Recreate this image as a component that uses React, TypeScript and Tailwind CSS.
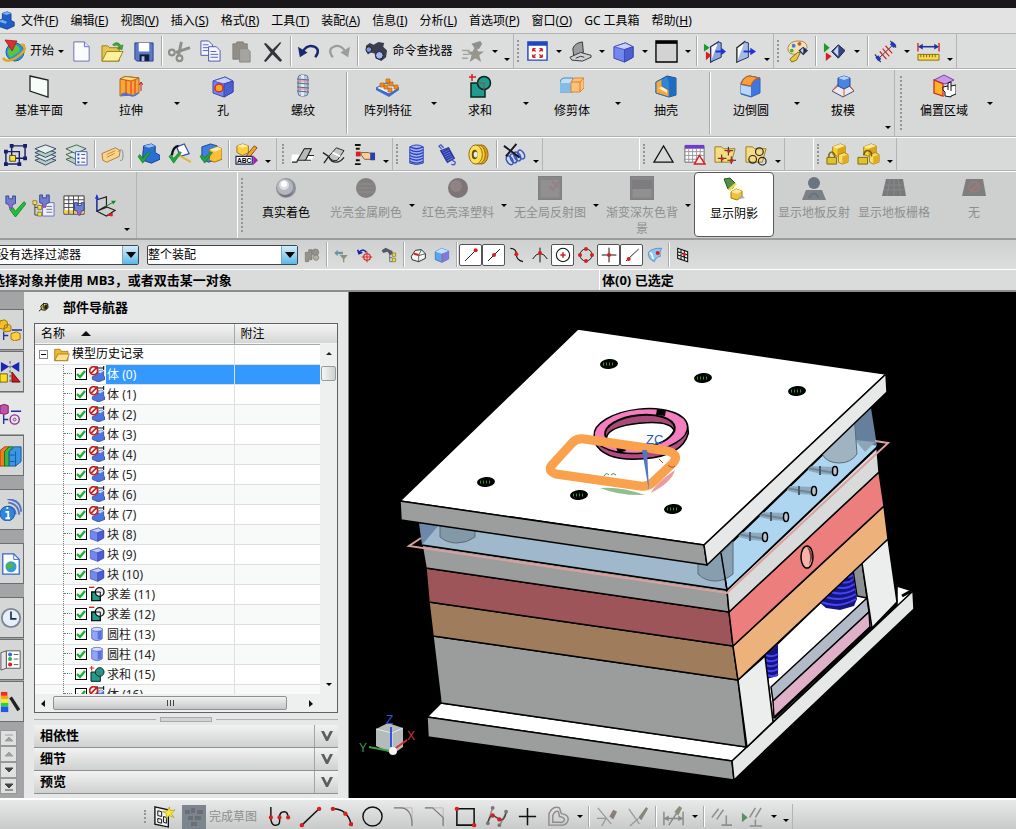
import { useState, type ReactNode } from 'react';

const RED = '#d81e1e';
const BLUE = '#3f66e0';

const cubeShape = (
    <>
        <path d="M2 7 14 3l8 4v11l-9 5-11-4z" fill="#7287f0" stroke="#3a49b0" />
        <path d="M2 7 14 3l8 4-9 3z" fill="#c9d1ff" stroke="#4a5ac4" />
        <path d="M13 10l9-3v11l-9 5z" fill="#4c5fd2" stroke="#3a49b0" />
    </>
);

const check = <path d="M1 14l5 7 8-11-2-1-6 7-3-4z" fill="#22a83a" stroke="#117024" strokeWidth=".6" />;

const funnelPipe = (
    <>
        <path d="M3 2h3v3h4V2h3v8l-3 1-1 4H7l-1-4-3-1z" fill="#6f7ed0" stroke="#3b479a" />
        <path d="M6 12h4l-2 4z" fill="#c04fd0" />
    </>
);

const brokenScreen = (
    <>
        <path d="M0 0h24v24H0z" fill="#7d7d7f" stroke="#6a6a6c" />
        <path d="M2 3h20v19H2z" fill="#878485" stroke="#747476" />
    </>
);

const yellowBoxes = (
    <>
        <path d="M7 4l8-3 5 2v8l-8 3-5-2z" fill="#f6cf3c" stroke="#a8820e" />
        <path d="M7 4l8-3 5 2-8 3z" fill="#fdeb9a" />
        <path d="M12 6l8-3v8l-8 3z" fill="#dba51b" />
        <path d="M13 12l6-2 4 2v8l-6 2-4-2z" fill="#fbdc64" stroke="#a8820e" />
        <path d="M17 14l6-2v8l-6 2z" fill="#e2ac22" />
    </>
);

const ICONS: Record<string, ReactNode> = {
    app: (
        <>
            <path d="M8 3l6-2 5 2v9l4 2v5l-9 4L2 19v-6l6-3z" fill="#1f5ec4" stroke="#123a86" />
            <path d="M8 3l6-2 5 2-6 2zM2 13l6-2 6 3-2 2z" fill="#78aef2" />
        </>
    ),
    start: (
        <>
            <circle cx="13" cy="13" r="9" fill="#2a8fe0" stroke="#1560a8" />
            <path d="M8 8q6-4 9 0t-3 7-5 5-4-7z" fill="#57c643" />
            <path d="M1 19q4 6 14-1T22 8q1-3-3-2" fill="none" stroke="#e2a91c" strokeWidth="2.4" />
            <path d="M3 1l12 1-5 10z" fill="#d93030" stroke="#8d1414" strokeWidth=".7" />
        </>
    ),
    new: (
        <>
            <path d="M4 2h11l5 5v15H4z" fill="#fbfbff" stroke="#6a6ec0" />
            <path d="M15 2v5h5" fill="#dfe2ff" stroke="#6a6ec0" />
        </>
    ),
    open: (
        <>
            <path d="M1 6h6l2 2h10v14H1z" fill="#e3c652" stroke="#a08018" />
            <path d="M1 22l5-10h17l-5 10z" fill="#fbf19a" stroke="#a08018" />
            <path d="M12 5q5-5 9 1l2-1-1 5-5-1 2-1q-2-4-5-2z" fill="#3ea537" stroke="#1d6f1d" strokeWidth=".5" />
        </>
    ),
    save: (
        <>
            <path d="M3 3h19v19H5l-2-2z" fill="#5b79c8" stroke="#2f4186" />
            <path d="M7 3h11v9H7z" fill="#fff" />
            <path d="M8 15h10v7H8z" fill="#111b3b" />
            <path d="M10 17h3v5h-3z" fill="#aebbe0" />
        </>
    ),
    cut: (
        <g fill="none" stroke="#8f8f8a" strokeWidth="2.2">
            <path d="M14 2l-3 14M23 8L8 13" strokeWidth="3" />
            <circle cx="4" cy="13" r="3" />
            <circle cx="12" cy="19" r="3" />
        </g>
    ),
    copy: (
        <>
            <path d="M2 1h8l4 4v11H2z" fill="#f4f5ff" stroke="#4d56b4" />
            <path d="M4 5h6M4 8h8M4 11h8" stroke="#5661c9" />
            <path d="M10 7h8l4 4v11H10z" fill="#f4f5ff" stroke="#4d56b4" />
            <path d="M12 12h6M12 15h8M12 18h8" stroke="#5661c9" />
        </>
    ),
    paste: (
        <>
            <path d="M3 4h4V2h7v2h4v16H3z" fill="#918e87" stroke="#85827b" />
            <path d="M10 9h8l3 3v11H10z" fill="#a5a49e" stroke="#8b8a85" />
        </>
    ),
    del: <path d="M3 4l2-1 7 7 8-8 1 1-7 9 8 9-2 2-8-8-7 8-2-1 7-9z" fill="#33353b" />,
    undo: (
        <>
            <path d="M6 12q5-8 12-5t1 11" fill="none" stroke="#19296f" strokeWidth="2.6" />
            <path d="M1 7l2 11 8-5z" fill="#19296f" />
        </>
    ),
    redo: (
        <>
            <path d="M18 12Q13 4 6 7t-1 11" fill="none" stroke="#9a9c9e" strokeWidth="2.4" />
            <path d="M23 7l-2 11-8-5z" fill="#9a9c9e" />
        </>
    ),
    find: (
        <>
            <path d="M1 6l4-3 4 2 5-3 6 1-1 4 4 4-1 7-5 4-6-3-1-5-4-1-3 2-2-4z" fill="#3b3f4d" />
            <circle cx="4" cy="10" r="3" fill="#7f97dd" stroke="#16182a" />
            <circle cx="15" cy="16" r="4" fill="#a6b9f2" stroke="#16182a" />
        </>
    ),
    star: (
        <>
            <path d="M10 4l9-3 2 3-3 5-4 1z" fill="#8f8f8f" />
            <path d="M14 6l3 6h6l-5 4 2 7-6-4-6 4 2-7-5-4h6z" fill="#98958c" />
            <path d="M0 11h8M1 15h7M0 19h6" stroke="#a3a3a3" strokeWidth="1.5" />
        </>
    ),
    fit: (
        <>
            <path d="M2 2h20v19H2z" fill="#fff" stroke="#2347c0" strokeWidth="1.5" />
            <path d="M2 2h20v4H2z" fill="#2347c0" />
            <path d="M7 9l3 3M7 9v3m0-3h3M17 9l-3 3m3-3v3m0-3h-3M7 18l3-3m-3 3v-3m0 3h3M17 18l-3-3m3 3v-3m0 3h-3" stroke={RED} strokeWidth="1.4" fill="none" />
        </>
    ),
    clip: (
        <>
            <path d="M4 9q2-6 10-7l1 11-10 5z" fill="#999ca0" stroke="#333" />
            <path d="M1 18l11-5 11 3v2l-9 4-11-1z" fill="#d0d1d3" stroke="#333" />
            <path d="M7 19l5-2 4 1" fill="none" stroke="#333" />
        </>
    ),
    cube: cubeShape,
    windowBox: (
        <>
            <path d="M1 1h22v22H1z" fill="#d3d3d3" stroke="#000" strokeWidth="1.4" />
            <path d="M1 1h22v3H1z" fill="#000" />
        </>
    ),
    sectionA: (
        <>
            <path d="M8 7l8-5v16l-8 5z" fill="#f5f9ff" stroke="#22315f" strokeWidth="1.4" />
            <path d="M16 2l3 1v15l-11 5" fill="#8ba4dd" stroke="#22315f" />
            <path d="M1 4l6 4-6 4z" fill="#189a2c" />
            <path d="M3 12l6 4-6 5z" fill={RED} />
            <path d="M13 12h7" stroke="#1e30d8" strokeWidth="2" />
            <path d="M19 8l5 4-5 4z" fill="#1e30d8" />
        </>
    ),
    sectionB: (
        <>
            <path d="M3 8l8-6v16l-8 5z" fill="#fff" stroke="#222" strokeWidth="1.4" />
            <path d="M11 2l4 1v15L3 23" fill="#a5bbe8" stroke="#22315f" />
            <path d="M10 12h8" stroke="#1e30d8" strokeWidth="2" />
            <path d="M17 8l6 4-6 4z" fill="#1e30d8" />
        </>
    ),
    palette: (
        <>
            <path d="M2 8q2-7 11-7t9 7q-1 3-6 2l-3 5q-12 1-11-7z" fill="#f3e3b6" stroke="#a6873c" />
            <circle cx="8" cy="6" r="2" fill="#3880e0" />
            <circle cx="14" cy="4" r="2" fill="#e04a30" />
            <circle cx="6" cy="11" r="2" fill="#42b243" />
            <path d="M12 13l-8 7 2 3 5-2 4-8z" fill="#e8c84a" stroke="#8a6b14" />
            <path d="M13 11l5-4 5 4-5 5z" fill="#233057" />
            <path d="M15 11l3-3v6z" fill="#c6d6ff" />
        </>
    ),
    marker: (
        <>
            <path d="M2 3l6 5-6 5z" fill="#189a2c" />
            <path d="M4 13l6 4-6 5z" fill={RED} />
            <path d="M10 12l7-7 7 6-7 8z" fill="#32457f" stroke="#1a2650" />
            <path d="M12 12l5-6v11z" fill="#c8d7ff" />
        </>
    ),
    measure: (
        <>
            <path d="M4 20L21 4" stroke="#333" />
            <path d="M6 12l7 8M9 9l7 8M12 6l7 8" stroke={RED} strokeWidth="1.2" />
            <path d="M1 15l6 8M17 1l6 7" stroke="#333" strokeWidth="1.2" />
            <path d="M3 17l3 4M18 3l4 4" stroke="#2434c0" strokeWidth="4" />
        </>
    ),
    ruler: (
        <>
            <path d="M1 3v9M23 3v9" stroke={RED} strokeWidth="1.4" />
            <path d="M3 7h18" stroke="#203299" strokeWidth="1.6" />
            <path d="M1 7l5-3v6zM23 7l-5-3v6z" fill="#203299" />
            <path d="M1 15h22v6H1z" fill="#f7dc4a" stroke="#8b6e10" />
            <path d="M4 15v3M7 15v3M10 15v3M13 15v3M16 15v3M19 15v3" stroke="#7d6410" />
        </>
    ),
    plane: <path d="M3 2l18 4v17L3 17z" fill="#f6fdf9" stroke="#222" strokeWidth="1.3" />,
    extrude: (
        <>
            <path d="M1 5q5-4 10-2l9 1v15q-5 4-9 2l-10 1z" fill="#f9a637" stroke="#b9640f" />
            <path d="M1 5q5-4 10-2l9 1-8 3z" fill="#ffdf8c" stroke="#b9640f" />
            <path d="M2 20q4-3 8 0t9-2v2q-4 4-8 2H2z" fill="#4777df" />
            <path d="M7 6v15M12 7v14M16 6v14" stroke="#d4381b" />
            <path d="M22 17V9m-2 2l2-3 2 3" fill="none" stroke="#c71818" />
        </>
    ),
    hole: (
        <>
            {cubeShape}
            <circle cx="8" cy="14" r="4" fill="#f5a81c" stroke="#d22" strokeWidth="1.4" />
        </>
    ),
    thread: (
        <>
            <rect x="7" y="1" width="10" height="21" rx="3" fill="#b6c5da" stroke="#6a7b96" />
            <path d="M10 1h3v21h-3z" fill="#dfe8f4" />
            <path d="M6 5l12 1M6 9l12 1M6 13l12 1M6 17l12 1" stroke="#5a6880" />
            <path d="M7 7h9M7 15h9" stroke="#d87c7c" />
        </>
    ),
    pattern: (
        <>
            <path d="M0 14l10-5 13 5-10 6z" fill="#e5efff" stroke="#2d55b8" />
            <path d="M0 14v2l13 7 10-7v-2l-10 6z" fill="#3f6bd2" />
            <path d="M4 9h4v4H4zM10 5h4v4h-4zM8 11h4v4H8zM13 8h4v4h-4zM12 14h4v4h-4zM18 11h4v4h-4z" fill="#f28a16" stroke="#b96a16" strokeWidth=".7" />
        </>
    ),
    unite: (
        <>
            <path d="M1 3h7M4 0v7" stroke={RED} strokeWidth="1.5" />
            <path d="M3 9h14v14H3z" fill="#1f9c8b" stroke="#0a2522" strokeWidth="1.5" />
            <circle cx="16" cy="9" r="6.5" fill="#1f9c8b" stroke="#0a2522" strokeWidth="1.5" />
            <path d="M9 9h7v7" fill="none" stroke="#b03a3a" strokeWidth=".8" />
        </>
    ),
    trim: (
        <>
            <path d="M0 8q1-4 4-4h9v14H0z" fill="#bfdff6" stroke="#4a86bd" />
            <path d="M0 9h11v9H0z" fill="#82bcea" />
            <path d="M11 8l3-4h10v10l-4 4h-9z" fill="#fbc27c" stroke="#d98932" />
            <path d="M11 8h9v10M20 8l4-4" fill="none" stroke="#e07a2a" />
        </>
    ),
    shell: (
        <>
            <path d="M2 8l11-6 9 2v17l-7 2-13-4z" fill="#2f86d8" stroke="#164f92" />
            <path d="M13 3l9 1v17l-7 2V9z" fill="#1f6cc0" />
            <path d="M2 8l6-3v7l7 4v7L2 19z" fill="#f4a93e" stroke="#3c74ae" />
            <path d="M4 14l9 5v-3l-5-3z" fill="#fff1c7" />
        </>
    ),
    blend: (
        <>
            <path d="M2 9q3-7 9-7l10 2v15l-9 4-10-3z" fill="#3f76df" stroke="#3b62b4" />
            <path d="M2 10q3-8 9-8l10 2q-7 0-9 8z" fill="#f9a03c" stroke="#c15a12" />
            <path d="M2 11l10 2v9L2 19z" fill="#b9d6ff" />
        </>
    ),
    draft: (
        <>
            <path d="M12 5L1 17l11 6 11-6z" fill="#e8eaec" stroke="#3c4b80" />
            <path d="M7 4l6-2 6 2v8l-6 3-6-3z" fill="#4a83e2" stroke="#24499c" />
            <path d="M7 4l6-2 6 2-6 2z" fill="#b6d1ff" />
            <path d="M7 12l-6 5M19 12l4 5M13 15v8" stroke="#e05b2a" />
        </>
    ),
    offset: (
        <>
            <path d="M2 6l10-5 10 5-9 4z" fill="#c79be6" stroke="#7c3ca8" />
            <path d="M2 6l9 4v12l-9-3z" fill="#ffb52a" stroke="#d42a1a" strokeWidth="1.3" />
            <path d="M11 13l5-1V9l3-1v4l5-1v9l-5 2v1l-6-1v-4l-2-2z" fill="#fff" stroke="#111" />
            <path d="M16 12v4M19 12v5" stroke="#111" fill="none" />
        </>
    ),
    selBox: (
        <>
            <path d="M8 3h14v13H8z" fill="none" stroke="#17206e" strokeWidth="1.5" />
            <path d="M2 9h14v13H2z" fill="none" stroke="#17206e" strokeWidth="1.5" />
            <path d="M6 13h6v6H6z" fill="#f6e73c" stroke="#55500a" />
            <g fill="#17206e">
                <path d="M6 1h4v4H6zM20 1h4v4h-4zM20 14h4v4h-4zM0 7h4v4H0zM0 20h4v4H0zM14 20h4v4h-4z" />
            </g>
        </>
    ),
    layers: (
        <g stroke="#35456a">
            <path d="M1 18l11-4 11 4-11 5z" fill="#b5d0c2" />
            <path d="M1 14l11-4 11 4-11 5z" fill="#d8e6de" />
            <path d="M1 10l11-4 11 4-11 5z" fill="#b5d0c2" />
            <path d="M1 6l11-4 11 4-11 5z" fill="#e4efe9" />
        </g>
    ),
    layerList: (
        <>
            <g stroke="#46604e">
                <path d="M1 17l11-4 9 4-10 5z" fill="#b5d0c2" />
                <path d="M1 12l11-4 9 4-10 5z" fill="#d8e6de" />
                <path d="M1 6l11-4 10 4-11 5z" fill="#cfe2d7" />
            </g>
            <path d="M11 9h12v14H11z" fill="#f4f6ff" stroke="#4c5fc0" />
            <path d="M13 12h2M13 16h2M13 20h2" stroke="#2447d8" strokeWidth="2" />
            <path d="M17 12h4M17 16h4M17 20h4" stroke="#555" />
        </>
    ),
    tag: (
        <>
            <path d="M1 11l14-6 5 3-1 6-13 6-4-2z" fill="#f9d58e" stroke="#b87a26" />
            <path d="M6 12l9-4M6 15l8-4" stroke="#c58a38" />
            <path d="M18 9q5-5 5 3t-3 6" fill="none" stroke="#888" />
        </>
    ),
    checkPart: (
        <>
            <path d="M7 3l8-2 4 2v7l5 3v4l-9 4-9-3v-6z" fill="#2c6fd4" stroke="#173f8a" />
            <path d="M7 3l8-2 4 2-7 2z" fill="#93c0ff" />
            {check}
        </>
    ),
    checkSheet: (
        <>
            <path d="M9 4l8-3 5 10-9 3z" fill="#fff" stroke="#3b4cb0" strokeWidth="1.3" />
            <path d="M4 13q1-9 7-10" fill="none" stroke="#111" strokeWidth="2.5" />
            <path d="M10 12l14 8" stroke="#dfb82c" strokeWidth="2" />
            {check}
        </>
    ),
    checkBox: (
        <>
            <path d="M3 4l9-3 7 2v14l-9 3-7-3z" fill="#3f7fe0" stroke="#1d4796" />
            <path d="M11 7l8-3 5 2v11l-8 3-5-2z" fill="#fbbf3a" stroke="#a86e0a" />
            <path d="M11 7l8-3 5 2-7 3z" fill="#ffe9a8" />
            {check}
        </>
    ),
    abc: (
        <>
            <path d="M2 3l6-2 6 2v7l-6 3-6-3z" fill="#f9ce3f" stroke="#a67908" />
            <path d="M2 3l6-2 6 2-6 2z" fill="#ffeeb0" />
            <path d="M12 13l8-10 3 2-8 10z" fill="#f3a42a" stroke="#8a4b08" />
            <path d="M1 14h17v8H1z" fill="#fff" stroke="#1c2270" strokeWidth="1.2" />
            <text x="2" y="21" fontSize="7" fontWeight="bold" fontFamily="Liberation Sans" fill="#000">
                ABC
            </text>
            <path d="M19 13l5 5-5 5z" fill="#a221a8" />
        </>
    ),
    edgeA: (
        <>
            <path d="M1 12h8l-5 8H0zM18 13h6l-3 6h-6z" fill="#fff" />
            <path d="M1 20h5l8-14h7l-6 12h6M18 13h6" fill="none" stroke="#222" strokeWidth="1.2" />
            <path d="M7 18l7-12h7l-6 12z" fill="#b9b9b9" stroke="#222" />
        </>
    ),
    edgeB: (
        <>
            <path d="M7 14l8-9 8 3-7 10q-5 2-9-4z" fill="#c3c5c3" stroke="#222" />
            <path d="M11 10l8 4" stroke="#fff" strokeWidth="2" />
            <path d="M1 10l6 4q2 6 8 6 4 0 8-5M2 21l5-7" fill="none" stroke="#222" strokeWidth="1.4" />
        </>
    ),
    handPick: (
        <>
            <path d="M2 1h6v2H2zM3 5h4v2H3zM3 17h4v2H3zM2 21h6v2H2z" fill="#111" />
            <path d="M3 9h5v5H3z" fill={RED} />
            <path d="M8 10h8l3 1v6h-7l-3-4z" fill="#f6d2a0" stroke="#8d5a22" />
            <path d="M18 10h5v8h-5z" fill="#2a3fae" />
        </>
    ),
    coil: (
        <g fill="none" stroke="#2c40bc" strokeWidth="1.3">
            <path d="M5 4q7-4 14 0v17q-7 3-14 0z" fill="#a3b3f3" strokeWidth="1" />
            <path d="M5 4q7 4 14 0M5 7q7 4 14 0M5 10q7 4 14 0M5 13q7 4 14 0M5 16q7 4 14 0M5 19q7 4 14 0" />
        </g>
    ),
    tension: (
        <g fill="none" stroke="#2b3ba6" strokeWidth="1.5">
            <path d="M6 6q-5-3-1-4l3 3M17 18l3 2q0 4-4 2" stroke="#4a5dc6" />
            <path d="M5 8l8-3 6 11-7 4z" fill="#7a8be0" />
            <path d="M6 10l8-4M7 12l8-4M8 14l8-4M9 16l8-4M10 18l8-4" />
        </g>
    ),
    disk: (
        <>
            <ellipse cx="15" cy="12" rx="7" ry="10" fill="#dba016" stroke="#8d660c" />
            <ellipse cx="12" cy="12" rx="7" ry="10" fill="#f8d133" stroke="#8d660c" />
            <ellipse cx="9" cy="12" rx="7" ry="10" fill="#fde05a" stroke="#8d660c" />
            <ellipse cx="8" cy="12" rx="3" ry="5" fill="#6b5008" />
            <ellipse cx="9" cy="12" rx="2" ry="3" fill="#e8e8e8" />
        </>
    ),
    coilDel: (
        <>
            <g fill="none" stroke="#3656c8" strokeWidth="1.6">
                <ellipse cx="7" cy="18" rx="3" ry="5" transform="rotate(-30 7 18)" />
                <ellipse cx="11" cy="16" rx="3" ry="5" transform="rotate(-30 11 16)" />
                <ellipse cx="15" cy="14" rx="3" ry="5" transform="rotate(-30 15 14)" />
                <ellipse cx="19" cy="12" rx="3" ry="5" transform="rotate(-30 19 12)" />
            </g>
            <path d="M1 3l16 12M14 1L3 14" stroke="#16181c" strokeWidth="2" />
        </>
    ),
    triangle: <path d="M12 3l10 17H2z" fill="none" stroke="#111" strokeWidth="1.3" />,
    tableWarn: (
        <>
            <path d="M2 3h20v17H2z" fill="#fff" stroke="#666" />
            <path d="M2 2h20v4H2z" fill="#6d3bd0" />
            <path d="M6 6v14M10 6v14M14 6v14M18 6v14M2 9h20M2 13h20M2 17h20" stroke="#999" />
            <path d="M17 13l6 9H12z" fill="#f6eaea" stroke={RED} strokeWidth="1.5" />
        </>
    ),
    folderPts: (
        <>
            <path d="M1 4h7l2 2h12l-4 14H1z" fill="#f5dc83" stroke="#9c7b1c" />
            <path d="M15 4v9M11 8h9M8 12v8M4 16h9M18 14v8M14 18h9" stroke="#222" />
            <path d="M14 7h3v3h-3zM7 15h3v3H7zM17 17h3v3h-3z" fill={RED} />
        </>
    ),
    folderCircles: (
        <>
            <path d="M1 4h7l2 2h12l-4 14H1z" fill="#f5dc83" stroke="#9c7b1c" />
            <g fill="none" stroke="#222" strokeWidth="1.2">
                <circle cx="15" cy="9" r="4" />
                <circle cx="8" cy="17" r="4" />
                <circle cx="18" cy="19" r="4" />
            </g>
        </>
    ),
    lock: (
        <>
            {yellowBoxes}
            <path d="M3 15v-3q3-5 6 0v3" fill="none" stroke="#7d6a08" strokeWidth="1.6" />
            <path d="M1 15h10v7H1z" fill="#dcc52c" stroke="#7d6a08" />
        </>
    ),
    unlock: (
        <>
            {yellowBoxes}
            <path d="M7 13q1-6 5-5t3 6" fill="none" stroke="#6f5d05" strokeWidth="1.6" />
            <path d="M1 15h10v7H1z" fill="#dcc52c" stroke="#7d6a08" />
        </>
    ),
    filterCheck: (
        <>
            <path d="M7 16l3-2 3 4 9-10 2 2-11 14z" fill="#1fc235" stroke="#0f8a20" />
            {funnelPipe}
        </>
    ),
    filterTree: (
        <>
            <path d="M11 9h12v14H11z" fill="#eef0ff" stroke="#6471c4" />
            <path d="M15 13h6M15 16h6M15 19h6" stroke="#777" />
            <path d="M3 9v13h5M3 14h5" fill="none" stroke="#444" />
            <path d="M1 7h4v4H1zM6 12h4v4H6zM6 19h4v4H6z" fill="#f4e05a" stroke="#806e12" strokeWidth=".8" />
            <g transform="translate(5 -1)">{funnelPipe}</g>
        </>
    ),
    filterTable: (
        <>
            <path d="M1 2h21v19H1z" fill="#fff" stroke="#333" />
            <path d="M1 17h21v3H1z" fill="#f4cf31" />
            <path d="M6 2v19M11 2v19M16 2v19M1 6h21M1 10h21M1 14h21" stroke="#444" />
            <g transform="translate(9 7)">{funnelPipe}</g>
        </>
    ),
    csys: (
        <>
            <path d="M3 6l10-3v11l-10 4zM3 18l9-5 10 4-9 6z" fill="none" stroke="#222" strokeWidth="1.2" />
            <path d="M3 18V2" stroke="#1e30d8" />
            <path d="M1 5l2-5 2 5z" fill="#1e30d8" />
            <path d="M12 13l9-5" stroke="#128a20" />
            <path d="M18 7l5 0-3 4z" fill="#128a20" />
            <path d="M14 22l5 1 0-3z" fill={RED} stroke={RED} />
        </>
    ),
    ballShiny: (
        <>
            <circle cx="12" cy="12" r="10" fill="#8e9199" />
            <circle cx="11" cy="11" r="8" fill="#b5b7bf" />
            <circle cx="10" cy="9" r="5" fill="#dcdce2" />
            <circle cx="10" cy="8" r="3" fill="#fff" />
            <path d="M5 17q7 5 14-2-2 6-7 6-5 0-7-4z" fill="#72757e" />
        </>
    ),
    ballMetal: (
        <>
            <circle cx="12" cy="12" r="10" fill="#777373" />
            <path d="M4 8h16M3 12h18M4 16h16" stroke="#8a8484" />
        </>
    ),
    ballRed: (
        <>
            <circle cx="12" cy="12" r="10" fill="#6f6466" />
            <circle cx="10" cy="10" r="6" fill="#867677" />
        </>
    ),
    reflect: (
        <>
            {brokenScreen}
            <path d="M11 10l4 4 6-9M14 5l6 6" stroke="#8c7474" strokeWidth="2" fill="none" />
        </>
    ),
    gradient: (
        <>
            {brokenScreen}
            <path d="M2 4h20v9H2z" fill="#6f6f72" />
        </>
    ),
    shadow: (
        <>
            <path d="M8 12l12-3 2 12-9 1z" fill="#fffbd8" />
            <path d="M2 2l6-1 5 5-2 5-5 1-2-5z" fill="#4f8f48" stroke="#24552a" />
            <path d="M6 12l7-6 2 1-7 7z" fill="#f4da46" />
            <path d="M9 15l5-3 6 2v6l-5 3-6-2z" fill="#f5c132" stroke="#a57a12" />
            <path d="M9 15l5-3 6 2-5 3z" fill="#fdeaa2" />
            <path d="M16 22l7-1-4-3z" fill="#aaa" />
        </>
    ),
    floorReflect: (
        <>
            <circle cx="12" cy="7" r="6" fill="#586673" />
            <path d="M4 14h16l4 10H0z" fill="#717476" />
            <path d="M7 22q5-9 10 0" fill="none" stroke="#4f6678" strokeWidth="2" />
        </>
    ),
    floorGrid: (
        <>
            <path d="M4 3h17l3 17H0z" fill="#6b6b6d" />
            <path d="M3 9h19M2 14h21M12 3v17M8 3l-3 17M16 3l3 17" stroke="#7c7c7e" />
        </>
    ),
    floorNone: (
        <>
            <path d="M4 3h17l3 17H0z" fill="#707070" />
            <circle cx="12" cy="11" r="5" fill="none" stroke="#a06a6a" strokeWidth="1.5" />
            <path d="M9 15l7-7" stroke="#a06a6a" strokeWidth="1.5" />
        </>
    ),
    gears: (
        <g fill="#93938b" stroke="#77776f">
            <path d="M2 8h5V4h5v15H7v3H2z" />
            <circle cx="17" cy="8" r="5" />
            <circle cx="18" cy="16" r="4" fill="#b5b19c" />
        </g>
    ),
    swapFunnel: (
        <>
            <path d="M2 9l5-5v3h8v4H7v3z" fill="#6d94a4" />
            <path d="M10 12h12l-5 6v5h-2v-5z" fill="#8f8f80" />
        </>
    ),
    targetBack: (
        <>
            <path d="M3 8q6-7 11 0M1 4l2 6 5-2" fill="none" stroke="#16229c" strokeWidth="2.4" />
            <circle cx="15" cy="15" r="5" fill="none" stroke={RED} strokeWidth="1.6" />
            <path d="M15 7v16M7 15h16" stroke={RED} strokeWidth="1.4" />
        </>
    ),
    findTree: (
        <>
            <path d="M1 5l6-4 10 5 1 5-5 1-3-5-7 2z" fill="#555a66" />
            <path d="M13 11v11h4M13 16h4" fill="none" stroke="#444" />
            <path d="M17 9h5v5h-5zM17 17h5v5h-5z" fill="#eedb4c" stroke="#7a6b14" />
        </>
    ),
    faceBody: (
        <>
            <path d="M2 14L8 5l9-1 6 6v7l-10 5-10-3z" fill="#f6f6f6" stroke="#222" strokeWidth="1.4" />
            <path d="M13 22v-9l4-9M13 13l10-3" fill="none" stroke="#222" />
            <path d="M6 10l7 2" stroke={RED} strokeWidth="3" />
        </>
    ),
    wireCube: (
        <>
            <path d="M2 7l9-5 11 4v12l-10 5-10-4z" fill="#59a8ee" stroke="#2a62b4" />
            <path d="M2 7l9-5 11 4-10 4z" fill="#bfe0ff" />
            <path d="M12 10l10-4v12l-10 5z" fill="#7d7be0" />
            <path d="M12 10v13" stroke="#e04444" />
        </>
    ),
    snapEnd: (
        <>
            <path d="M3 21L19 5" stroke="#111" strokeWidth="1.4" />
            <circle cx="19" cy="5" r="3" fill={RED} />
        </>
    ),
    snapMid: (
        <>
            <path d="M3 21L21 3" stroke="#111" strokeWidth="1.4" />
            <circle cx="12" cy="12" r="3" fill={RED} />
        </>
    ),
    snapCurve: (
        <>
            <path d="M2 2q9 0 9 9t10 11" fill="none" stroke="#111" strokeWidth="1.8" />
            <circle cx="11" cy="11" r="3" fill={RED} />
        </>
    ),
    snapCross: (
        <>
            <path d="M12 1v22M1 18q11-17 22 0" fill="none" stroke="#111" strokeWidth="1.5" />
            <circle cx="12" cy="9" r="3" fill={RED} />
        </>
    ),
    snapCenter: (
        <>
            <circle cx="12" cy="12" r="10" fill="none" stroke="#111" strokeWidth="1.6" />
            <path d="M12 8v8M8 12h8" stroke={RED} strokeWidth="2.4" />
        </>
    ),
    snapQuad: (
        <>
            <circle cx="12" cy="12" r="9" fill="none" stroke="#111" strokeWidth="1.4" />
            <g fill={RED}>
                <circle cx="12" cy="3" r="3" />
                <circle cx="12" cy="21" r="3" />
                <circle cx="3" cy="12" r="3" />
                <circle cx="21" cy="12" r="3" />
            </g>
        </>
    ),
    snapPoint: (
        <>
            <path d="M12 1v22M1 12h22" stroke="#111" strokeWidth="1.5" />
            <circle cx="12" cy="12" r="3" fill={RED} />
        </>
    ),
    snapOn: (
        <>
            <path d="M3 21L22 3" stroke="#111" strokeWidth="1.4" />
            <circle cx="7" cy="18" r="3" fill={RED} />
        </>
    ),
    snapFace: (
        <>
            <path d="M2 8q6-7 20-6-4 5-2 12-7 1-9 8-10-4-9-14z" fill="#8fc5f4" stroke="#3b78bf" />
            <path d="M4 9q4 0 5 9" stroke="#e9f5ff" strokeWidth="3" fill="none" />
            <circle cx="16" cy="9" r="3" fill={RED} />
        </>
    ),
    snapGrid: (
        <>
            <path d="M4 2l15 5v15L4 17z" fill="#eee" stroke="#111" strokeWidth="1.6" />
            <path d="M9 4v15M14 5v15M4 7l15 5M4 12l15 5" stroke="#111" strokeWidth="1.6" />
            <circle cx="14" cy="11" r="2.5" fill={RED} />
        </>
    ),
    pin: (
        <>
            <path d="M2 20l7-6" stroke="#111" strokeWidth="2" />
            <path d="M6 9l6-6 9 1 1 8-6 6-8-1z" fill="#e3d23a" stroke="#111" strokeWidth="2" />
            <path d="M12 3l-1 9 5 5" fill="none" stroke="#111" strokeWidth="2" />
            <path d="M15 6h6v8l-4 3-4-5z" fill="#222" />
        </>
    ),
    folder: (
        <>
            <path d="M1 5h8l2 3h10v14H1z" fill="#f0b72e" stroke="#8f620a" />
            <path d="M1 22l5-10h17l-4 10z" fill="#fde08a" stroke="#8f620a" />
        </>
    ),
    body: (
        <>
            <path d="M12 9l6-3 4 2v7l2 2v3l-10 4-9-4v-4l7-3z" fill="#4c74e0" stroke="#1e378c" />
            <path d="M12 9l6-3 4 2-5 3z" fill="#c3d6ff" />
            <path d="M12 3h10M12 0v6M22 0v6" stroke="#111" strokeWidth="1.6" />
            <circle cx="7" cy="7" r="6" fill="#fff" stroke="#c81c1c" strokeWidth="2.6" />
            <path d="M3 11l8-8" stroke="#c81c1c" strokeWidth="2.6" />
        </>
    ),
    subtract: (
        <>
            <path d="M0 2h8" stroke={RED} strokeWidth="2" />
            <path d="M4 9h13v13H4z" fill="#1f9c8b" stroke="#111" strokeWidth="2" />
            <circle cx="16" cy="9" r="6.5" fill="#e9e9e9" stroke="#111" strokeWidth="2" />
            <path d="M10 9h7v6" fill="none" stroke="#111" strokeWidth="1.5" />
        </>
    ),
    cylinder: (
        <>
            <path d="M4 4v15q8 6 16 0V4z" fill="#93a5f6" stroke="#3f50bc" />
            <path d="M13 6h6v14h-6z" fill="#5d71de" />
            <ellipse cx="12" cy="5" rx="8" ry="3" fill="#d8deff" stroke="#3f50bc" />
        </>
    ),
    sketchNew: (
        <>
            <path d="M2 2l14 3v18L2 20z" fill="#f2f2f2" stroke="#111" strokeWidth="1.4" />
            <path d="M5 6l4 1v5l-4-1zM11 12l3 1v6l-3-1zM5 14l4 1v4l-4-1z" fill="none" stroke="#111" />
            <path d="M17 2l1 4 5-1-4 4 3 4-5-2-3 3v-5l-4-2 5-1z" fill="#f8ea2c" stroke="#a28b06" strokeWidth=".6" />
        </>
    ),
    sketchDone: (
        <>
            <path d="M0 0h24v24H0z" fill="#7c858d" />
            <path d="M3 5h5v4H3zM9 3h4v5H9zM15 5h6v4h-6zM6 11h5v4H6zM13 11h6v4h-6zM9 17h6v4H9z" fill="#6b6f74" />
        </>
    ),
    profile: (
        <>
            <path d="M3 2v13q1 7 6 6 4 0 3-8 0-6 5-6 4 0 4 7" fill="none" stroke="#111" strokeWidth="1.5" />
            <g fill={RED}>
                <circle cx="3" cy="13" r="2.2" />
                <circle cx="12" cy="13" r="2.2" />
                <circle cx="21" cy="13" r="2.2" />
            </g>
        </>
    ),
    line: (
        <>
            <path d="M3 21L21 4" stroke="#111" strokeWidth="1.5" />
            <circle cx="3" cy="21" r="2.3" fill={RED} />
            <circle cx="21" cy="4" r="2.3" fill={RED} />
        </>
    ),
    arc: (
        <>
            <path d="M3 4q15 0 19 16" fill="none" stroke="#111" strokeWidth="1.5" />
            <g fill={RED}>
                <circle cx="3" cy="4" r="2.3" />
                <circle cx="16" cy="9" r="2.3" />
                <circle cx="22" cy="20" r="2.3" />
            </g>
        </>
    ),
    circle: <circle cx="12" cy="12" r="10" fill="none" stroke="#111" strokeWidth="1.5" />,
    fillet: (
        <>
            <path d="M2 3h19v19" fill="none" stroke="#bdb6b6" />
            <path d="M2 3h8q11 1 11 19" fill="none" stroke="#857b7b" strokeWidth="1.3" />
        </>
    ),
    chamfer: (
        <>
            <path d="M2 3h19v19" fill="none" stroke="#bdb6b6" />
            <path d="M2 3h8l11 10v9" fill="none" stroke="#857b7b" strokeWidth="1.3" />
        </>
    ),
    rect: (
        <>
            <path d="M3 4h18v17H3z" fill="none" stroke="#111" strokeWidth="1.6" />
            <circle cx="3" cy="4" r="2.3" fill={RED} />
            <circle cx="21" cy="21" r="2.3" fill={RED} />
        </>
    ),
    spline: (
        <>
            <path d="M3 18L8 3M16 20l6-12" stroke="#888" strokeWidth="1.5" />
            <path d="M3 18q3-9 6-7t7 4 6-7" fill="none" stroke="#444" strokeWidth="1.5" />
            <g fill="#777">
                <circle cx="8" cy="3" r="2" />
                <circle cx="3" cy="19" r="2" />
                <circle cx="15" cy="21" r="2" />
                <circle cx="22" cy="7" r="2" />
            </g>
            <circle cx="8" cy="11" r="2.3" fill={RED} />
            <circle cx="15" cy="15" r="2.3" fill={RED} />
        </>
    ),
    plus: <path d="M12 3v18M3 12h18" stroke="#111" strokeWidth="1.6" />,
    offsetCurve: (
        <g fill="none" stroke="#918b8b" strokeWidth="1.5">
            <path d="M2 21V9q4-9 11-6l2 6q8 1 7 7-2 6-8 5z" />
            <path d="M6 18v-7q3-6 6-4l1 5q6 1 5 4t-5 2z" />
        </g>
    ),
    trimCurve: (
        <>
            <path d="M3 3l14 17M2 14h10M7 22l5-9" fill="none" stroke="#999" strokeWidth="1.3" />
            <path d="M15 12l4-7 4 2-4 8z" fill="#8a7f78" />
        </>
    ),
    extendCurve: (
        <>
            <path d="M3 4l11 16M4 22l9-8" fill="none" stroke="#999" strokeWidth="1.3" />
            <path d="M13 13l8-11 2 2-7 12z" fill="#85857a" />
        </>
    ),
    dimension: (
        <>
            <path d="M2 7v14M22 7v14M2 14h20M7 21L17 6" stroke="#888" strokeWidth="1.5" />
            <path d="M2 14l5-3v6zM22 14l-5-3v6z" fill="#888" />
            <path d="M13 7l5-6 3 2-4 8z" fill="#8a8f7a" />
        </>
    ),
    constraint: <path d="M2 13L9 4M7 15l7-10M12 21h11M17 11v10" stroke="#918d8d" strokeWidth="1.6" fill="none" />,
    constraintAuto: (
        <>
            <path d="M1 8l6 5-6 5z" fill="#5d8c62" />
            <path d="M9 13l6-10M15 13l6-10M9 22h13M15 15v7" stroke="#918d8d" strokeWidth="1.6" fill="none" />
        </>
    ),
    resAssembly: (
        <>
            <path d="M0 2l5-1 3 2v6l-5 2-4-1zM5 7l5-1 2 2v5l-5 1-3-1z" fill="#f1bf27" stroke="#9a6d06" />
            <path d="M4 14v9M4 18h5M13 12h11" stroke="#203299" strokeWidth="1.4" />
            <path d="M12 16l6-2 4 2v6l-6 2-4-2z" fill="#f9cf45" stroke="#9a6d06" />
        </>
    ),
    resConstraint: (
        <>
            <path d="M1 1l9 5-9 6zM21 1l-9 5 9 6z" fill="#1826b8" />
            <path d="M11 0v24" stroke="#444" strokeDasharray="3 2" />
            <path d="M0 14h8v9H0z" fill="#f8e028" stroke="#6c5e08" />
            <path d="M13 12l9 11h-9z" fill="#c22020" stroke="#6a0808" />
        </>
    ),
    resPart: (
        <>
            <path d="M0 3q5-3 9 0v8q-4 3-9 0z" fill="#c052a8" stroke="#741d62" />
            <path d="M4 13v10M4 18h5M12 9h11" stroke="#203299" strokeWidth="1.5" />
            <circle cx="16" cy="18" r="5" fill="none" stroke="#8d2b90" strokeWidth="1.5" />
            <circle cx="16" cy="18" r="1.5" fill="none" stroke="#8d2b90" />
        </>
    ),
    resBooks: (
        <>
            <path d="M0 6l5-4h5L5 7v16H0z" fill="#ee7d22" stroke="#98430a" />
            <path d="M5 7l5-5h5l-5 5v16H5z" fill="#39b944" stroke="#156b1e" />
            <path d="M10 7l6-5h7v16l-6 5h-7z" fill="#3c96e8" stroke="#155597" />
            <path d="M17 7v16M11 11h5M11 18h5" stroke="#155597" />
        </>
    ),
    resInfo: (
        <>
            <path d="M9 4q11 1 12 13M8 0q15 1 15 14M9 8q8 1 8 9" fill="none" stroke="#5474c4" strokeWidth="2" />
            <circle cx="8" cy="16" r="8" fill="#2f86dc" stroke="#1a5498" />
            <path d="M6 14h3v7M6 21h5M7 10h2" fill="none" stroke="#fff" strokeWidth="2" />
        </>
    ),
    resWeb: (
        <>
            <path d="M3 1h12l6 6v16H3z" fill="#fafcff" stroke="#3a66c4" strokeWidth="1.4" />
            <path d="M15 1v6h6" fill="none" stroke="#3a66c4" />
            <circle cx="12" cy="15" r="6" fill="#3a9ad8" />
            <path d="M8 12q4-3 6 0t-2 4-2 4-3-5z" fill="#4bbb3e" />
        </>
    ),
    resClock: (
        <>
            <circle cx="12" cy="12" r="11" fill="#7c8694" />
            <circle cx="12" cy="12" r="9" fill="#e6effa" />
            <path d="M12 5v8h6" fill="none" stroke="#1a2c4c" strokeWidth="1.8" />
        </>
    ),
    resRoles: (
        <>
            <path d="M1 4l6-2v19l-6 2z" fill="#e4e4e4" stroke="#555" />
            <path d="M7 2h15v19H7z" fill="#fff" stroke="#555" />
            <circle cx="11" cy="6" r="2.2" fill={BLUE} />
            <circle cx="11" cy="11" r="2.2" fill="#2fae3c" />
            <circle cx="11" cy="17" r="2.2" fill={RED} />
            <path d="M15 6h5M15 11h5M15 17h5" stroke="#555" />
        </>
    ),
    resColor: (
        <>
            <path d="M1 1h7v5H1z" fill="#ef2b1f" />
            <path d="M1 5h8v4H1z" fill="#f7a51f" />
            <path d="M1 9h8v4H1z" fill="#f0ee2a" />
            <path d="M1 13h8v4H1z" fill="#26cf4a" />
            <path d="M1 17h8v6H1z" fill="#1f58e8" />
            <path d="M10 8l3-2 9 14-3 2z" fill="#222" />
        </>
    ),
};

function Icon({ name, className = 'size-6' }: { name: string; className?: string }) {
    return (
        <svg viewBox="0 0 24 24" className={`shrink-0 ${className}`} aria-hidden="true">
            {ICONS[name]}
        </svg>
    );
}

function Caret() {
    return (
        <svg viewBox="0 0 6 3" className="h-[3px] w-1.5" aria-hidden="true">
            <path d="M0 0h6L3 3z" fill="#000" />
        </svg>
    );
}

function Tool({ icon, label, className = 'w-[31px]' }: { icon: string; label?: string; className?: string }) {
    return (
        <button type="button" aria-label={label ?? icon} className={`flex h-full shrink-0 items-center justify-center gap-1 whitespace-nowrap ${className}`}>
            <Icon name={icon} className="size-[23px]" />
            {label}
        </button>
    );
}

function Drop({ className = 'w-3' }: { className?: string }) {
    return (
        <button type="button" aria-label="更多" className={`flex h-full shrink-0 items-center justify-center ${className}`}>
            <Caret />
        </button>
    );
}

// small arrow in the lower right corner of a toolbar group
function Overflow() {
    return (
        <button type="button" aria-label="工具条选项" className="flex h-full w-3 shrink-0 items-end justify-center pb-[7px]">
            <Caret />
        </button>
    );
}

function Sep() {
    return (
        <div className="flex h-full w-[5px] shrink-0 justify-center py-0.5">
            <div className="w-0.5 border-l border-[#a9aaab] bg-white" />
        </div>
    );
}

function Grip() {
    return (
        <div className="flex h-full w-2 shrink-0 justify-center py-1.5">
            <div className="border-l-2 border-dotted border-[#949494]" />
        </div>
    );
}

function Group({ children, className = '' }: { children: ReactNode; className?: string }) {
    return <div className={`flex h-full shrink-0 items-center border-r border-[#b3b4b5] ${className}`}>{children}</div>;
}

function BigTool({ icon, label, disabled, active, className = 'w-[78px]' }: { icon: string; label: string; disabled?: boolean; active?: boolean; className?: string }) {
    return (
        <button
            type="button"
            disabled={disabled}
            className={`flex shrink-0 flex-col items-center gap-[5px] self-stretch pt-1 ${className} ${disabled ? 'text-[#8d8f8e]' : ''} ${active ? 'mb-px rounded-sm border border-[#5a5560] bg-white' : ''}`}
        >
            <Icon name={icon} className={disabled ? 'size-6 opacity-85' : 'size-6'} />
            <span className="leading-4">{label}</span>
        </button>
    );
}

const menus: [string, string][] = [
    ['文件', 'F'],
    ['编辑', 'E'],
    ['视图', 'V'],
    ['插入', 'S'],
    ['格式', 'R'],
    ['工具', 'T'],
    ['装配', 'A'],
    ['信息', 'I'],
    ['分析', 'L'],
    ['首选项', 'P'],
    ['窗口', 'O'],
    ['GC 工具箱', ''],
    ['帮助', 'H'],
];

function MenuBar() {
    return (
        <nav className="flex h-[26px] shrink-0 items-center gap-3 border-b border-[#b5b5b5] bg-[#e3e3e3]">
            <div className="-mr-2 w-[17px] overflow-hidden">
                <Icon name="app" className="-ml-1 size-[19px]" />
            </div>
            {menus.map(([name, key]) => (
                <button type="button" key={name} className="shrink-0 whitespace-nowrap">
                    {name}
                    {key && (
                        <>
                            (<u>{key}</u>)
                        </>
                    )}
                </button>
            ))}
        </nav>
    );
}

function StandardBar() {
    return (
        <div className="flex h-[35px] shrink-0 items-center border-b border-[#b0b1b1] bg-[#dcdddd]">
            <Group>
                <button type="button" className="flex w-[66px] items-center gap-1 pl-0.5">
                    <Icon name="start" />
                    开始
                    <Caret />
                </button>
                <Tool icon="new" />
                <Tool icon="open" />
                <Tool icon="save" />
                <Sep />
                <Tool icon="cut" />
                <Tool icon="copy" />
                <Tool icon="paste" />
                <Tool icon="del" />
                <Sep />
                <Tool icon="undo" />
                <Tool icon="redo" />
                <Sep />
                <Tool icon="find" label="命令查找器" className="w-[98px]" />
                <Tool icon="star" />
                <Drop />
                <Overflow />
            </Group>
            <Group>
                <Grip />
                <Tool icon="fit" />
                <Drop />
                <Tool icon="clip" />
                <Drop />
                <Tool icon="cube" />
                <Drop />
                <Tool icon="windowBox" />
                <Drop />
                <Sep />
                <Tool icon="sectionA" />
                <Tool icon="sectionB" />
                <Overflow />
            </Group>
            <Group>
                <Grip />
                <Tool icon="palette" />
                <Sep />
                <Tool icon="marker" />
                <Drop className="w-4" />
                <Sep />
                <Tool icon="measure" />
                <Drop />
                <Tool icon="ruler" />
                <Overflow />
            </Group>
        </div>
    );
}

function FeatureRibbon() {
    return (
        <div className="flex h-[68px] shrink-0 items-center border-t border-b border-t-white border-b-[#b0b1b1] bg-[#d7d8d8]">
            <Group>
                <BigTool icon="plane" label="基准平面" />
                <Drop className="w-[14px]" />
                <BigTool icon="extrude" label="拉伸" />
                <Drop className="w-[14px]" />
                <BigTool icon="hole" label="孔" />
                <BigTool icon="thread" label="螺纹" className="w-[82px]" />
                <Sep />
                <BigTool icon="pattern" label="阵列特征" />
                <Drop className="w-[14px]" />
                <BigTool icon="unite" label="求和" />
                <Drop className="w-[14px]" />
                <BigTool icon="trim" label="修剪体" />
                <Drop className="w-[14px]" />
                <BigTool icon="shell" label="抽壳" className="w-[82px]" />
                <Sep />
                <BigTool icon="blend" label="边倒圆" />
                <Drop className="w-[14px]" />
                <BigTool icon="draft" label="拔模" />
                <Overflow />
            </Group>
            <div className="flex h-full items-center pl-0.5">
                <Grip />
                <BigTool icon="offset" label="偏置区域" />
                <Drop className="w-[14px]" />
            </div>
        </div>
    );
}

function UtilityBar() {
    return (
        <div className="flex h-[34px] shrink-0 items-center border-t border-b border-t-white border-b-[#b0b1b1] bg-[#d8d9d9]">
            <Group className="pr-0.5">
                <Tool icon="selBox" className="w-[30px]" />
                <Tool icon="layers" />
                <Tool icon="layerList" />
                <Sep />
                <Tool icon="tag" />
                <Sep />
                <Tool icon="checkPart" />
                <Tool icon="checkSheet" />
                <Tool icon="checkBox" />
                <Sep />
                <Tool icon="abc" />
                <Overflow />
            </Group>
            <Group className="pl-0.5">
                <Grip />
                <Tool icon="edgeA" />
                <Tool icon="edgeB" />
                <Tool icon="handPick" />
                <Overflow />
            </Group>
            <Group>
                <Grip />
                <Tool icon="coil" />
                <Tool icon="tension" />
                <Tool icon="disk" />
                <Sep />
                <Tool icon="coilDel" />
                <Overflow />
            </Group>
            <Group className="ml-24 border-l border-l-white">
                <Grip />
                <Tool icon="triangle" />
                <Tool icon="tableWarn" />
                <Tool icon="folderPts" />
                <Tool icon="folderCircles" />
                <Overflow />
            </Group>
            <Group className="ml-7 border-l border-l-white">
                <Grip />
                <Tool icon="lock" />
                <Tool icon="unlock" />
                <Overflow />
            </Group>
        </div>
    );
}

function RenderRibbon() {
    return (
        <div className="flex h-[69px] shrink-0 items-center border-t border-b-2 border-t-white border-b-[#9b9c9c] bg-[#ced0cf]">
            <Group className="w-[137px]">
                <Tool icon="filterCheck" className="w-7" />
                <Tool icon="filterTree" />
                <Tool icon="filterTable" />
                <Tool icon="csys" />
                <Overflow />
            </Group>
            <div className="ml-[100px] flex h-full items-center border-l border-white">
                <Grip />
                <BigTool icon="ballShiny" label="真实着色" className="w-20" />
                <BigTool icon="ballMetal" label="光亮金属刷色" className="w-20" disabled />
                <Drop />
                <BigTool icon="ballRed" label="红色亮泽塑料" className="w-20" disabled />
                <Drop />
                <BigTool icon="reflect" label="无全局反射图" className="w-20" disabled />
                <Drop />
                <BigTool icon="gradient" label="渐变深灰色背景" className="w-20" disabled />
                <Drop />
                <BigTool icon="shadow" label="显示阴影" className="w-20" active />
                <BigTool icon="floorReflect" label="显示地板反射" className="w-20" disabled />
                <BigTool icon="floorGrid" label="显示地板栅格" className="w-20" disabled />
                <BigTool icon="floorNone" label="无" className="w-20" disabled />
            </div>
        </div>
    );
}

function Combo({ label, options, className }: { label: string; options: string[]; className: string }) {
    return (
        <div className={`relative h-5 shrink-0 ${className}`}>
            <select aria-label={label} className="size-full appearance-none rounded-xs border border-[#3d4650] bg-white text-xs leading-4">
                {options.map(o => (
                    <option key={o}>{o}</option>
                ))}
            </select>
            <span className="pointer-events-none absolute inset-y-px right-px flex w-4 items-center justify-center border-l border-[#7fa6ba] bg-gradient-to-b from-[#d3edf9] to-[#58b8e6]">
                <svg viewBox="0 0 10 6" className="h-1.5 w-2.5" aria-hidden="true">
                    <path d="M0 0h10L5 6z" fill="#000" />
                </svg>
            </span>
        </div>
    );
}

const snaps: [string, boolean][] = [
    ['snapEnd', true],
    ['snapMid', true],
    ['snapCurve', false],
    ['snapCross', false],
    ['snapCenter', true],
    ['snapQuad', false],
    ['snapPoint', true],
    ['snapOn', true],
    ['snapFace', false],
];

function SmallTool({ icon, active, className = 'w-6' }: { icon: string; active?: boolean; className?: string }) {
    return (
        <button
            type="button"
            aria-label={icon}
            aria-pressed={active}
            className={`flex h-[22px] shrink-0 items-center justify-center ${className} ${active ? 'rounded-xs border border-[#55525a] bg-white' : ''}`}
        >
            <Icon name={icon} className="size-4" />
        </button>
    );
}

function SelectionBar() {
    return (
        <div className="flex h-[30px] shrink-0 items-center border-b border-white bg-gradient-to-b from-[#cfd1d0] to-[#dcdddd]">
            <Combo label="过滤器" options={['没有选择过滤器']} className="-ml-1 w-[143px]" />
            <Combo label="选择范围" options={['整个装配']} className="mr-0.5 ml-2 w-[151px]" />
            <SmallTool icon="gears" />
            <Sep />
            <SmallTool icon="swapFunnel" />
            <SmallTool icon="targetBack" />
            <SmallTool icon="findTree" />
            <Sep />
            <SmallTool icon="faceBody" />
            <SmallTool icon="wireCube" />
            <Sep />
            {snaps.map(([icon, active]) => (
                <SmallTool key={icon} icon={icon} active={active} className="w-[23px]" />
            ))}
            <Sep />
            <SmallTool icon="snapGrid" />
        </div>
    );
}

function PromptBar() {
    return (
        <div className="flex h-[22px] shrink-0 items-center overflow-hidden border-b-2 border-[#8b8c8c] bg-[#dadbdb] text-[13px] leading-5 font-bold whitespace-nowrap">
            <p className="-ml-2 w-[607px] shrink-0">选择对象并使用 MB3，或者双击某一对象</p>
            <p className="border-l border-white pl-0.5">体(0) 已选定</p>
        </div>
    );
}

function ResourceTab({ icon, active, className = '' }: { icon: string; active?: boolean; className?: string }) {
    return (
        <button
            type="button"
            aria-label={icon}
            className={`flex h-[41px] w-full shrink-0 items-center justify-start border-y ${active ? 'border-transparent bg-[#e6e7e7]' : 'border-r border-[#6d6e70] bg-[#d5d6d6]'} ${className}`}
        >
            <Icon name={icon} className="size-[22px]" />
        </button>
    );
}

const scrollGlyphs = ['M1 1h8M5 3l4 4H1z', 'M5 2l4 4H1z', 'M5 6L1 2h8z', 'M1 8h8M5 6L1 2h8z'];

function ResourceBar() {
    return (
        <aside className="flex w-6 shrink-0 flex-col overflow-hidden bg-[#a3a4a5] pt-[17px]">
            <ResourceTab icon="resAssembly" />
            <ResourceTab icon="resConstraint" className="mt-px" />
            <ResourceTab icon="resPart" active className="mt-px" />
            <ResourceTab icon="resBooks" className="mt-px" />
            <ResourceTab icon="resInfo" className="mt-[13px]" />
            <ResourceTab icon="resWeb" className="mt-[13px]" />
            <ResourceTab icon="resClock" className="mt-[13px]" />
            <ResourceTab icon="resRoles" className="mt-px" />
            <ResourceTab icon="resColor" className="mt-px" />
            <div className="mt-2 flex w-[17px] flex-col">
                {scrollGlyphs.map((d, i) => (
                    <button type="button" key={d} aria-label="滚动" className="flex h-4 items-center justify-center border border-[#97989a] bg-[#dfe0e0]">
                        <svg viewBox="0 0 10 9" className="h-[9px] w-2.5" aria-hidden="true">
                            <path d={d} fill={i < 2 ? '#a0a0a0' : '#444'} stroke={i < 2 ? '#a0a0a0' : '#444'} />
                        </svg>
                    </button>
                ))}
            </div>
        </aside>
    );
}

interface Feature {
    id: number;
    name: string;
    icon: string;
}

const features: Feature[] = [
    ...[0, 1, 2, 3, 4, 5, 6, 7].map(id => ({ id, name: '体', icon: 'body' })),
    { id: 8, name: '块', icon: 'cube' },
    { id: 9, name: '块', icon: 'cube' },
    { id: 10, name: '块', icon: 'cube' },
    { id: 11, name: '求差', icon: 'subtract' },
    { id: 12, name: '求差', icon: 'subtract' },
    { id: 13, name: '圆柱', icon: 'cylinder' },
    { id: 14, name: '圆柱', icon: 'cylinder' },
    { id: 15, name: '求和', icon: 'unite' },
    { id: 16, name: '体', icon: 'body' },
];

function FeatureRow({ feature, selected, onSelect }: { feature: Feature; selected: boolean; onSelect: () => void }) {
    const inputId = `feature-${feature.id}`;

    return (
        <tr className="border-b border-[#dedfdf] even:bg-[#f8f9f9] odd:bg-white" onClick={onSelect}>
            <td className="border-r border-[#dedfdf] p-0">
                <div className="flex h-[19px] items-center pl-7">
                    <span className="h-full w-3 border-l border-dotted border-[#777]">
                        <span className="block h-1/2 w-2 border-b border-dotted border-[#777]" />
                    </span>
                    <span className="relative size-3 shrink-0">
                        <input id={inputId} type="checkbox" defaultChecked className="peer block size-3 appearance-none border border-black bg-white" />
                        <svg viewBox="0 0 12 12" className="pointer-events-none invisible absolute inset-0 peer-checked:visible" aria-hidden="true">
                            <path d="M2 6l3 3 5-6" fill="none" stroke="#12b52b" strokeWidth="2.4" />
                        </svg>
                    </span>
                    <Icon name={feature.icon} className="mr-px ml-0.5 size-4" />
                    <label htmlFor={inputId} className={`h-full flex-1 pl-px leading-[19px] ${selected ? 'bg-[#3399ff] text-white' : 'text-[#222]'}`}>
                        {feature.name} ({feature.id})
                    </label>
                </div>
            </td>
            <td className={selected ? 'bg-[#3399ff] p-0' : 'p-0'} />
        </tr>
    );
}

function FeatureTree() {
    const [selected, setSelected] = useState(0);

    return (
        <div className="mx-2.5 flex min-h-0 flex-1 flex-col border border-[#5f6164] bg-white">
            <div className="relative min-h-0 flex-1 overflow-hidden">
                <table className="w-full table-fixed border-collapse">
                    <colgroup>
                        <col className="w-[199px]" />
                        <col />
                    </colgroup>
                    <thead>
                        <tr className="h-5 border-b border-[#a7a8a9] bg-gradient-to-b from-[#f5f5f5] to-[#d5d6d6]">
                            <th className="border-r border-[#a7a8a9] p-0 pl-1.5 text-left font-normal">
                                <span className="flex h-[19px] items-center gap-4">
                                    名称
                                    <svg viewBox="0 0 10 5" className="h-[5px] w-2.5" aria-hidden="true">
                                        <path d="M5 0l5 5H0z" fill="#111" />
                                    </svg>
                                </span>
                            </th>
                            <th className="p-0 pl-1.5 text-left font-normal">附注</th>
                        </tr>
                    </thead>
                    <tbody>
                        <tr className="border-b border-[#dedfdf]">
                            <td className="border-r border-[#dedfdf] p-0">
                                <div className="flex h-[19px] items-center pl-1">
                                    <button type="button" aria-label="折叠" className="mr-1.5 flex size-[9px] items-center justify-center border border-[#8a8b8c]">
                                        <span className="h-px w-[5px] bg-black" />
                                    </button>
                                    <Icon name="folder" className="mr-0.5 size-4" />
                                    模型历史记录
                                </div>
                            </td>
                            <td className="p-0" />
                        </tr>
                        {features.map(f => (
                            <FeatureRow key={f.id} feature={f} selected={selected === f.id} onSelect={() => setSelected(f.id)} />
                        ))}
                    </tbody>
                </table>
                <div className="absolute top-5 right-0 bottom-0 flex w-[17px] flex-col items-center bg-[#eeefef]">
                    <svg viewBox="0 0 6 3" className="mt-2 h-[3px] w-1.5" aria-hidden="true">
                        <path d="M3 0l3 3H0z" fill="#222" />
                    </svg>
                    <div className="mt-[11px] h-[15px] w-[15px] rounded-xs border border-[#9a9b9c] bg-gradient-to-r from-[#f6f6f6] to-[#cfd0d1]" />
                    <div className="mt-auto mb-2">
                        <Caret />
                    </div>
                </div>
            </div>
            <div className="flex h-[18px] shrink-0 items-center bg-[#eeefef] pl-1.5">
                <svg viewBox="0 0 4 7" className="h-[7px] w-1" aria-hidden="true">
                    <path d="M4 0v7L0 4z" fill="#111" />
                </svg>
                <div className="ml-2 flex h-[14px] w-[234px] items-center justify-center gap-0.5 rounded-xs border border-[#8f9092] bg-gradient-to-b from-[#f1f1f1] to-[#c6c7c8]">
                    <i className="h-1.5 w-px bg-[#444]" />
                    <i className="h-1.5 w-px bg-[#444]" />
                    <i className="h-1.5 w-px bg-[#444]" />
                </div>
                <svg viewBox="0 0 4 7" className="ml-[22px] h-[7px] w-1" aria-hidden="true">
                    <path d="M0 0v7l4-3z" fill="#111" />
                </svg>
            </div>
        </div>
    );
}

function Navigator() {
    return (
        <section className="flex w-[325px] shrink-0 flex-col border-r border-[#7d7e80] bg-[#e6e7e7] pb-1">
            <h2 className="flex h-[31px] shrink-0 items-center gap-3.5 pl-[14px] text-[13px] font-bold">
                <Icon name="pin" className="size-[11px]" />
                部件导航器
            </h2>
            <FeatureTree />
            <div className="mx-2.5 flex h-3 shrink-0 items-center gap-1">
                <span className="h-px flex-1 bg-[#aeafb0]" />
                <span className="h-[5px] w-[52px] border border-[#a9aaab] bg-[#d2d3d3]" />
                <span className="h-px flex-1 bg-[#aeafb0]" />
            </div>
            {['相依性', '细节', '预览'].map(title => (
                <button
                    type="button"
                    key={title}
                    className="mx-2.5 flex h-[23px] shrink-0 items-center justify-between border-b border-[#8f9092] bg-gradient-to-b from-[#f2f2f2] to-[#cfd0d0] pl-1.5 text-[13px] font-bold"
                >
                    {title}
                    <span className="flex h-full w-6 items-center justify-center border-l border-[#a3a4a5]">
                        <svg viewBox="0 0 12 10" className="h-2.5 w-3" aria-hidden="true">
                            <path d="M0 0h3l3 6 3-6h3L7 10H5z" fill="#5c5d60" />
                        </svg>
                    </span>
                </button>
            ))}
        </section>
    );
}

const screwHoles = [
    [609, 364],
    [703, 378],
    [797, 391],
    [486, 482],
    [579, 495],
    [673, 509],
];

const pins = [
    [835, 471],
    [814, 491],
    [786, 517],
    [765, 537],
];

// mold base assembly, drawn back to front
function Viewport() {
    return (
        <svg viewBox="349 292 667 506" preserveAspectRatio="xMinYMin slice" className="h-full min-w-0 flex-1 bg-black" role="img" aria-label="模架装配">
            <g stroke="#000" strokeWidth="1.5" strokeLinejoin="round">
                {/* base plate */}
                <path d="M427 717l14-14 306 44-15 14z" fill="#fff" />
                <path d="M897 586l16 5-16 16z" fill="#fff" />
                <path d="M902 596l9-5" strokeWidth="3" />
                <path d="M427 717l305 44 2 19-306-43z" fill="#9c9e9e" />
                <path d="M732 761l181-170 1 18-180 171z" fill="#e6e8e8" />
                {/* ejector plates seen between the legs */}
                <path d="M765 656l97-93 10 65-99 94z" fill="#fff" />
                <path d="M853 570l9-8 5 36-10-2z" fill="#8d9092" />
                <path d="M771 687l96-89 2 14-96 89z" fill="#b2bac8" />
                <path d="M773 701l96-89 1 15-96 91z" fill="#dfb0c8" />
                <path d="M774 718l97-91" strokeWidth="3" />
            </g>
            {/* return springs */}
            <path d="M819 602l33-34 5 31-3 7-14 4-14-2z" fill="#15157c" />
            <path d="M821 602q18 7 35-3M826 597q16 5 30-3M831 592q13 4 24-3M836 587q11 3 18-3M841 582q8 2 12-3M847 577q4 0 6-2" fill="none" stroke="#4444ff" strokeWidth="2" />
            <path d="M766 655l12-11v32l-12 3z" fill="#15157c" />
            <path d="M767 675q6 3 11-1M766 670q6 3 12-1M766 665q6 3 12-1M766 660q6 3 12-1M766 655q6 3 12-1" fill="none" stroke="#4444ff" strokeWidth="2" />
            <g stroke="#000" strokeWidth="1.5" strokeLinejoin="round">
                <path d="M862 563l26-24 9 63-25 26z" fill="#eceded" />
                <path d="M433 636l305 44 8 67-305-44z" fill="#9b9d9d" />
                <path d="M738 680l27-24 8 66-26 25z" fill="#eceded" />
                {/* B plate */}
                <path d="M429 602l304 44 5 34-305-44z" fill="#9f7c5c" />
                <path d="M733 646l151-140 4 33-150 141z" fill="#edb27c" />
                {/* A plate */}
                <path d="M426 568l303 44 4 34-304-44z" fill="#9d5559" />
                <path d="M729 612l150-140 5 34-151 140z" fill="#ec7e7e" />
                <ellipse cx="807" cy="557" rx="6" ry="11" fill="#f7b3aa" />
                <path d="M807 547q5 8 2 18 4-6 3-12-2-5-5-6z" fill="#7a3f3f" stroke="none" />
                {/* stripper plate */}
                <path d="M422 545l305 45 2 22-303-44z" fill="#9b9d9d" />
                <path d="M727 590l150-142 2 24-150 140z" fill="#d9dbdb" />
                {/* transparent plate */}
                <path d="M419 523l303 28 5 39-305-45z" fill="#9fb8cc" />
                <path d="M721 553l150-145 6 39-150 143z" fill="#aed6f0" />
            </g>
            <path d="M853 424l18-16 6 38-22-6z" fill="#667f9c" />
            <path d="M855 440l20 2-10 10z" fill="#8fa4b4" />
            <path d="M419 523l20 2-17 20z" fill="#6d88a8" />
            <g fill="#8399a8" stroke="#5b6c78">
                <path d="M440 515h35v22q-8 6-18 6t-17-6z" />
                <path d="M698 540h35v34q-8 7-18 7t-17-7z" fillOpacity=".85" />
                <path d="M827 415l26-15 4 54q-6 9-18 9t-17-9z" fill="#9fb3c0" />
            </g>
            <path d="M721 553l6 37" stroke="#000" strokeWidth="1.5" />
            {pins.map(([x, y]) => (
                <g key={x}>
                    <path d={`M${x - 28} ${y - 5}l28 1v8l-14-1-12-3z`} fill="#8fa9bc" />
                    <path d={`M${x - 28} ${y - 3}l28 5`} stroke="#6d8799" strokeWidth="2" />
                    <path d={`M${x - 15} ${y - 5}v9`} stroke="#46586a" strokeWidth="2" />
                    <ellipse cx={x} cy={y} rx="2.5" ry="4.5" fill="#b9c6cf" stroke="#000" strokeWidth="1.5" />
                </g>
            ))}
            <path d="M421 538l-12 8 318 47 161-150-13-2" fill="none" stroke="#daa0a0" strokeWidth="2" />
            {/* top clamp plate */}
            <g stroke="#000" strokeWidth="1.5" strokeLinejoin="round">
                <path d="M578 329l308 45-182 171-304-44z" fill="#fff" />
                <path d="M400 501l304 44 3 20-306-45z" fill="#9c9e9e" />
                <path d="M704 545l182-171 1 18-180 173z" fill="#e7e8e8" />
            </g>
            {screwHoles.map(([x, y]) => (
                <g key={x}>
                    <ellipse cx={x} cy={y} rx="9" ry="5" fill="#000" transform={`rotate(-5 ${x} ${y})`} />
                    <path d={`M${x - 6} ${y}h12`} stroke="#1c9c2a" strokeWidth="3" strokeDasharray="1 2" />
                </g>
            ))}
            {/* locating ring */}
            <g transform="rotate(-6 641 432)" stroke="#000" strokeWidth="1.5">
                <path d="M594 432v6q8 20 47 21t47-21v-6z" fill="#b34b83" />
                <ellipse cx="641" cy="431" rx="47" ry="22" fill="#f57ec0" />
                <ellipse cx="640" cy="431" rx="35" ry="16" fill="#a84a78" strokeWidth="2" />
                <path d="M606 434q3-11 34-11t34 11q-8 13-34 13t-34-13z" fill="#fff" />
            </g>
            <path d="M657 409l9 1-1 6-9-1zM616 447l8-1 2 5-8 2z" fill="#000" />
            <path d="M600 488q20-2 45 7-25 1-45-7z" fill="#8fbf8f" />
            <path d="M651 493q4-9 24-23-3 12-24 23z" fill="#eb9c9c" />
            <path d="M584 439l84 12q12 4 5 12l-20 19q-5 5-13 4l-84-12q-9-3-4-9l20-22q5-5 12-4z" fill="none" stroke="#f9a14c" strokeWidth="9" />
            <path d="M642 450h5l2 41z" fill="#5077c8" />
            <path d="M659 459l4 4M668 465q4 4 7 1" stroke="#c84040" fill="none" />
            <path d="M604 476q2-4 5-1m2 0q2-3 5 0" stroke="#3f8f3f" fill="none" />
            <text x="646" y="444" fontFamily="Liberation Sans" fontSize="13" fill="#2a58d8">
                ZC
            </text>
            {/* view triad */}
            <path d="M376 729l12-6 15 5v19l-10 7-17-8z" fill="#b5baba" />
            <path d="M376 729l16 4 11-5M392 733v21" stroke="#e3e8e8" fill="none" />
            <path d="M391 727v20" stroke="#2e56e8" strokeWidth="2" />
            <path d="M393 750l14-10" stroke="#d83030" strokeWidth="2" />
            <path d="M369 747l21 4" stroke="#3d9c4a" strokeWidth="2" />
            <circle cx="393" cy="751" r="4" fill="#f4f4f4" />
            <g fontFamily="Liberation Sans" fontSize="12">
                <text x="386" y="724" fill="#2e56e8">
                    Z
                </text>
                <text x="407" y="740" fill="#d83030">
                    X
                </text>
                <text x="359" y="752" fill="#3d9c4a">
                    Y
                </text>
            </g>
        </svg>
    );
}

const sketchTools = ['profile', 'line', 'arc', 'circle', 'fillet', 'chamfer', 'rect', 'spline', 'plus', 'offsetCurve'];

function SketchBar() {
    return (
        <footer className="flex h-[31px] shrink-0 items-center border-t-2 border-white bg-gradient-to-b from-[#e8e9e9] to-[#c9cbca] pt-1 pl-[141px]">
            <Group>
                <Grip />
                <Tool icon="sketchNew" />
                <button type="button" disabled className="flex w-[84px] shrink-0 items-center gap-[3px] pl-0.5 whitespace-nowrap text-[#8d8f8e]">
                    <Icon name="sketchDone" />
                    完成草图
                </button>
                {sketchTools.map(icon => (
                    <Tool key={icon} icon={icon} />
                ))}
                <Drop />
                <Sep />
                <Tool icon="trimCurve" />
                <Tool icon="extendCurve" />
                <Sep />
                <Tool icon="dimension" />
                <Drop />
                <Sep />
                <Tool icon="constraint" />
                <Tool icon="constraintAuto" />
                <Drop />
                <Overflow />
            </Group>
        </footer>
    );
}

export default function App() {
    return (
        <div className="flex h-screen flex-col overflow-hidden bg-[#dcdddd] font-['Noto_Sans','Noto_Sans_CJK_SC',sans-serif] text-xs text-black">
            <div className="h-2 shrink-0 bg-[#1a171b]" />
            <MenuBar />
            <StandardBar />
            <FeatureRibbon />
            <UtilityBar />
            <RenderRibbon />
            <SelectionBar />
            <PromptBar />
            <main className="flex min-h-0 flex-1">
                <ResourceBar />
                <Navigator />
                <Viewport />
            </main>
            <SketchBar />
        </div>
    );
}
